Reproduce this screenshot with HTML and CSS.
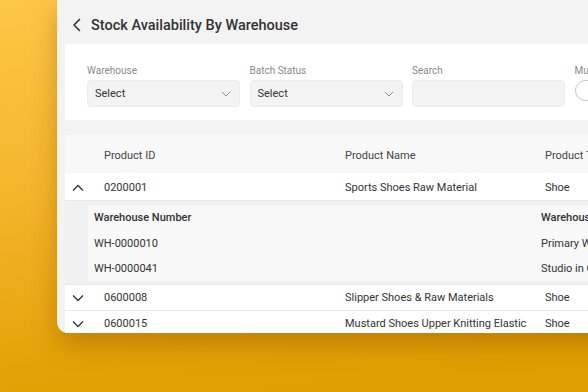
FILE: index.html
```html
<!DOCTYPE html>
<html lang="en">
<head>
  <meta charset="UTF-8" />
  <meta name="viewport" content="width=device-width, initial-scale=1.0" />
  <title>Stock Availability By Warehouse</title>
  <link rel="stylesheet" href="styles.css">
</head>
<body>
  <div class="window">
    <div class="title-bar">
      <svg class="back" width="10" height="14" viewBox="0 0 10 14"><path d="M7.5 1.5 L2 7 L7.5 12.5" fill="none" stroke="#333" stroke-width="1.6" stroke-linecap="round" stroke-linejoin="round"/></svg>
      <h1>Stock Availability By Warehouse</h1>
    </div>

    <div class="filters">
      <div class="field">
        <label>Warehouse</label>
        <div class="select">Select
          <svg width="10" height="6" viewBox="0 0 10 6"><path d="M1 1 L5 5 L9 1" fill="none" stroke="#888" stroke-width="1"/></svg>
        </div>
      </div>
      <div class="field">
        <label>Batch Status</label>
        <div class="select">Select
          <svg width="10" height="6" viewBox="0 0 10 6"><path d="M1 1 L5 5 L9 1" fill="none" stroke="#888" stroke-width="1"/></svg>
        </div>
      </div>
      <div class="field">
        <label>Search</label>
        <div class="select"></div>
      </div>
      <div class="field">
        <label>Multiple</label>
        <div class="switch"><span class="knob"></span></div>
      </div>
    </div>

    <div class="table">
      <div class="row head">
        <span class="toggle"></span>
        <span class="c-id">Product ID</span>
        <span class="c-name">Product Name</span>
        <span class="c-type">Product Type</span>
      </div>

      <div class="row">
        <span class="toggle">
          <svg width="12" height="8" viewBox="0 0 12 8"><path d="M1 6.5 L6 1.5 L11 6.5" fill="none" stroke="#333" stroke-width="1.3"/></svg>
        </span>
        <span class="c-id">0200001</span>
        <span class="c-name">Sports Shoes Raw Material</span>
        <span class="c-type">Shoe</span>
      </div>

      <div class="detail">
        <div class="detail-inner">
          <div class="sub head-sub"><span class="s-num">Warehouse Number</span><span class="s-name">Warehouse Name</span></div>
          <div class="sub"><span class="s-num">WH-0000010</span><span class="s-name">Primary Warehouse</span></div>
          <div class="sub"><span class="s-num">WH-0000041</span><span class="s-name">Studio in Canton</span></div>
        </div>
      </div>

      <div class="row">
        <span class="toggle">
          <svg width="12" height="8" viewBox="0 0 12 8"><path d="M1 1.5 L6 6.5 L11 1.5" fill="none" stroke="#333" stroke-width="1.3"/></svg>
        </span>
        <span class="c-id">0600008</span>
        <span class="c-name">Slipper Shoes &amp; Raw Materials</span>
        <span class="c-type">Shoe</span>
      </div>

      <div class="row">
        <span class="toggle">
          <svg width="12" height="8" viewBox="0 0 12 8"><path d="M1 1.5 L6 6.5 L11 1.5" fill="none" stroke="#333" stroke-width="1.3"/></svg>
        </span>
        <span class="c-id">0600015</span>
        <span class="c-name">Mustard Shoes Upper Knitting Elastic</span>
        <span class="c-type">Shoe</span>
      </div>
    </div>
  </div>
</body>
</html>
```

FILE: styles.css
```css
html, body {
  margin: 0;
  height: 100%;
  overflow: hidden;
}
body {
  font-family: Roboto, "Noto Sans", sans-serif;
  background: linear-gradient(170deg, #fec648 0%, #f4b52c 40%, #e5a208 75%, #df9d00 100%);
  color: #333;
}
.window {
  margin-left: 57px;
  width: 600px;
  height: 333px;
  background: #f3f3f3;
  border-bottom-left-radius: 11px;
  overflow: hidden;
  box-shadow: 0 12px 24px rgba(120, 70, 0, 0.35);
}
.title-bar {
  height: 44px;
  display: flex;
  align-items: center;
  padding: 6px 0 0 15px;
  gap: 9px;
  box-sizing: border-box;
}
.title-bar h1 {
  margin: 0;
  font-size: 14.5px;
  font-weight: 500;
  color: #333;
}
.filters {
  margin-left: 8px;
  background: #fff;
  height: 76px;
  box-sizing: border-box;
  padding: 21px 0 0 22px;
  display: grid;
  grid-template-columns: 153px 153px 153px 60px;
  column-gap: 9.5px;
}
.field label {
  display: block;
  font-size: 10px;
  color: #8a8a8a;
  line-height: 12px;
  margin-bottom: 3px;
}
.select {
  height: 27px;
  background: #f3f3f3;
  border: 1px solid #ececec;
  border-radius: 4px;
  box-sizing: border-box;
  display: flex;
  align-items: center;
  justify-content: space-between;
  padding: 0 8px 0 7px;
  font-size: 11px;
  color: #333;
}
.switch {
  margin-top: 3px;
  width: 40px;
  height: 21px;
  border: 1.5px solid #c4c4c4;
  border-radius: 11px;
  box-sizing: border-box;
  background: #fff;
}
.table {
  margin: 15px 0 0 8px;
  background: #fff;
}
.row {
  display: flex;
  align-items: center;
  height: 25px;
  font-size: 11px;
  color: #333;
  border-bottom: 1.5px solid #e8e8e8;
}
.row.head {
  height: 38px;
  padding-top: 2px;
  box-sizing: border-box;
  background: #f8f8f8;
  color: #444;
  border-bottom: none;
}
.row.head + .row {
  padding-top: 2px;
}
.toggle {
  width: 39px;
  padding-left: 7px;
  box-sizing: border-box;
  display: flex;
  align-items: center;
}
.c-id { width: 241px; }
.c-name { width: 200px; }
.c-type { white-space: nowrap; }
.detail {
  background: #f1f1f1;
  padding: 4px 0 3px 23px;
  border-bottom: 1.5px solid #e8e8e8;
}
.detail-inner {
  background: #f8f8f8;
  padding: 0 0 0 6px;
}
.sub {
  height: 25px;
  display: flex;
  align-items: center;
  font-size: 11px;
  color: #333;
}
.head-sub {
  font-weight: 500;
  padding-bottom: 1px;
}
.s-num { width: 447px; }
.s-name { white-space: nowrap; }
```
